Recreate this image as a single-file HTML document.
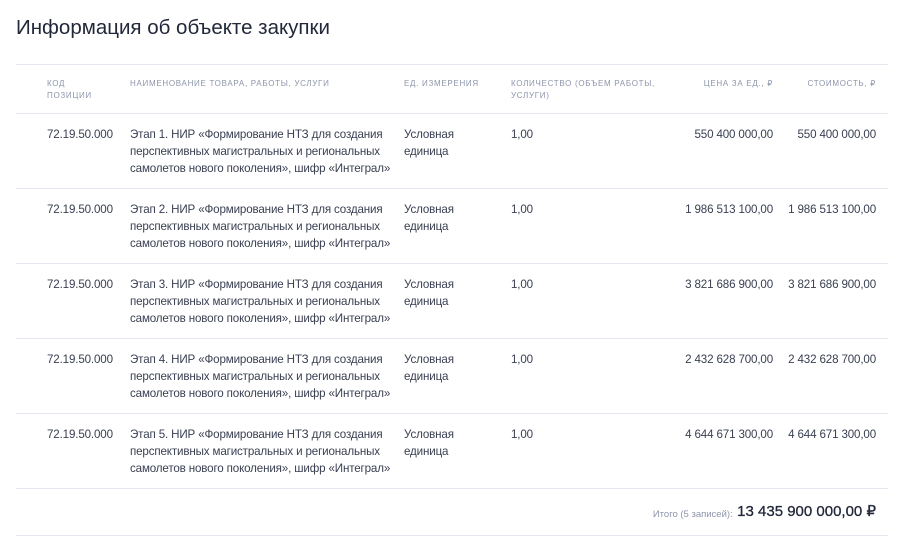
<!DOCTYPE html>
<html><head><meta charset="utf-8"><style>
body{margin:0;width:920px;height:547px;background:#fff;font-family:"Liberation Sans",sans-serif;color:#2b3040;position:relative;overflow:hidden}
.a{position:absolute}
h1{position:absolute;left:16px;top:16px;margin:0;font-size:20.5px;font-weight:normal;color:#22283a}
.ln{position:absolute;left:16px;width:872px;height:1px;background:#e4e7f1}
.h{position:absolute;top:78px;font-size:8px;letter-spacing:0.7px;color:#8d95aa;line-height:12px;text-transform:uppercase}
.c{position:absolute;font-size:11.6px;letter-spacing:-0.15px;line-height:17px;color:#3a4052}
.r{text-align:right}
</style></head><body>
<h1>Информация об объекте закупки</h1>
<div class="ln" style="top:64px"></div>
<div class="h" style="left:47px">Код<br>позиции</div>
<div class="h" style="left:130px">Наименование товара, работы, услуги</div>
<div class="h" style="left:404px">Ед. измерения</div>
<div class="h" style="left:511px">Количество (объем работы,<br>услуги)</div>
<div class="h r" style="right:147px">Цена за ед., ₽</div>
<div class="h r" style="right:44px">Стоимость, ₽</div>
<div class="ln" style="top:113px"></div>

<div class="c" style="left:47px;top:126px">72.19.50.000</div>
<div class="c" style="left:130px;top:126px">Этап 1. НИР «Формирование НТЗ для создания<br>перспективных магистральных и региональных<br>самолетов нового поколения», шифр «Интеграл»</div>
<div class="c" style="left:404px;top:126px">Условная<br>единица</div>
<div class="c" style="left:511px;top:126px">1,00</div>
<div class="c r" style="right:147px;top:126px">550 400 000,00</div>
<div class="c r" style="right:44px;top:126px">550 400 000,00</div>
<div class="ln" style="top:188px"></div>

<div class="c" style="left:47px;top:201px">72.19.50.000</div>
<div class="c" style="left:130px;top:201px">Этап 2. НИР «Формирование НТЗ для создания<br>перспективных магистральных и региональных<br>самолетов нового поколения», шифр «Интеграл»</div>
<div class="c" style="left:404px;top:201px">Условная<br>единица</div>
<div class="c" style="left:511px;top:201px">1,00</div>
<div class="c r" style="right:147px;top:201px">1 986 513 100,00</div>
<div class="c r" style="right:44px;top:201px">1 986 513 100,00</div>
<div class="ln" style="top:263px"></div>

<div class="c" style="left:47px;top:276px">72.19.50.000</div>
<div class="c" style="left:130px;top:276px">Этап 3. НИР «Формирование НТЗ для создания<br>перспективных магистральных и региональных<br>самолетов нового поколения», шифр «Интеграл»</div>
<div class="c" style="left:404px;top:276px">Условная<br>единица</div>
<div class="c" style="left:511px;top:276px">1,00</div>
<div class="c r" style="right:147px;top:276px">3 821 686 900,00</div>
<div class="c r" style="right:44px;top:276px">3 821 686 900,00</div>
<div class="ln" style="top:338px"></div>

<div class="c" style="left:47px;top:351px">72.19.50.000</div>
<div class="c" style="left:130px;top:351px">Этап 4. НИР «Формирование НТЗ для создания<br>перспективных магистральных и региональных<br>самолетов нового поколения», шифр «Интеграл»</div>
<div class="c" style="left:404px;top:351px">Условная<br>единица</div>
<div class="c" style="left:511px;top:351px">1,00</div>
<div class="c r" style="right:147px;top:351px">2 432 628 700,00</div>
<div class="c r" style="right:44px;top:351px">2 432 628 700,00</div>
<div class="ln" style="top:413px"></div>

<div class="c" style="left:47px;top:426px">72.19.50.000</div>
<div class="c" style="left:130px;top:426px">Этап 5. НИР «Формирование НТЗ для создания<br>перспективных магистральных и региональных<br>самолетов нового поколения», шифр «Интеграл»</div>
<div class="c" style="left:404px;top:426px">Условная<br>единица</div>
<div class="c" style="left:511px;top:426px">1,00</div>
<div class="c r" style="right:147px;top:426px">4 644 671 300,00</div>
<div class="c r" style="right:44px;top:426px">4 644 671 300,00</div>
<div class="ln" style="top:488px"></div>

<div class="a" style="right:44px;top:502px;white-space:nowrap"><span style="font-size:9.5px;color:#8d95aa;position:relative;top:1px">Итого (5 записей):</span> <span style="font-size:15px;color:#22283a;-webkit-text-stroke:0.3px #22283a">13 435 900 000,00 ₽</span></div>
<div class="ln" style="top:535px"></div>
</body></html>
